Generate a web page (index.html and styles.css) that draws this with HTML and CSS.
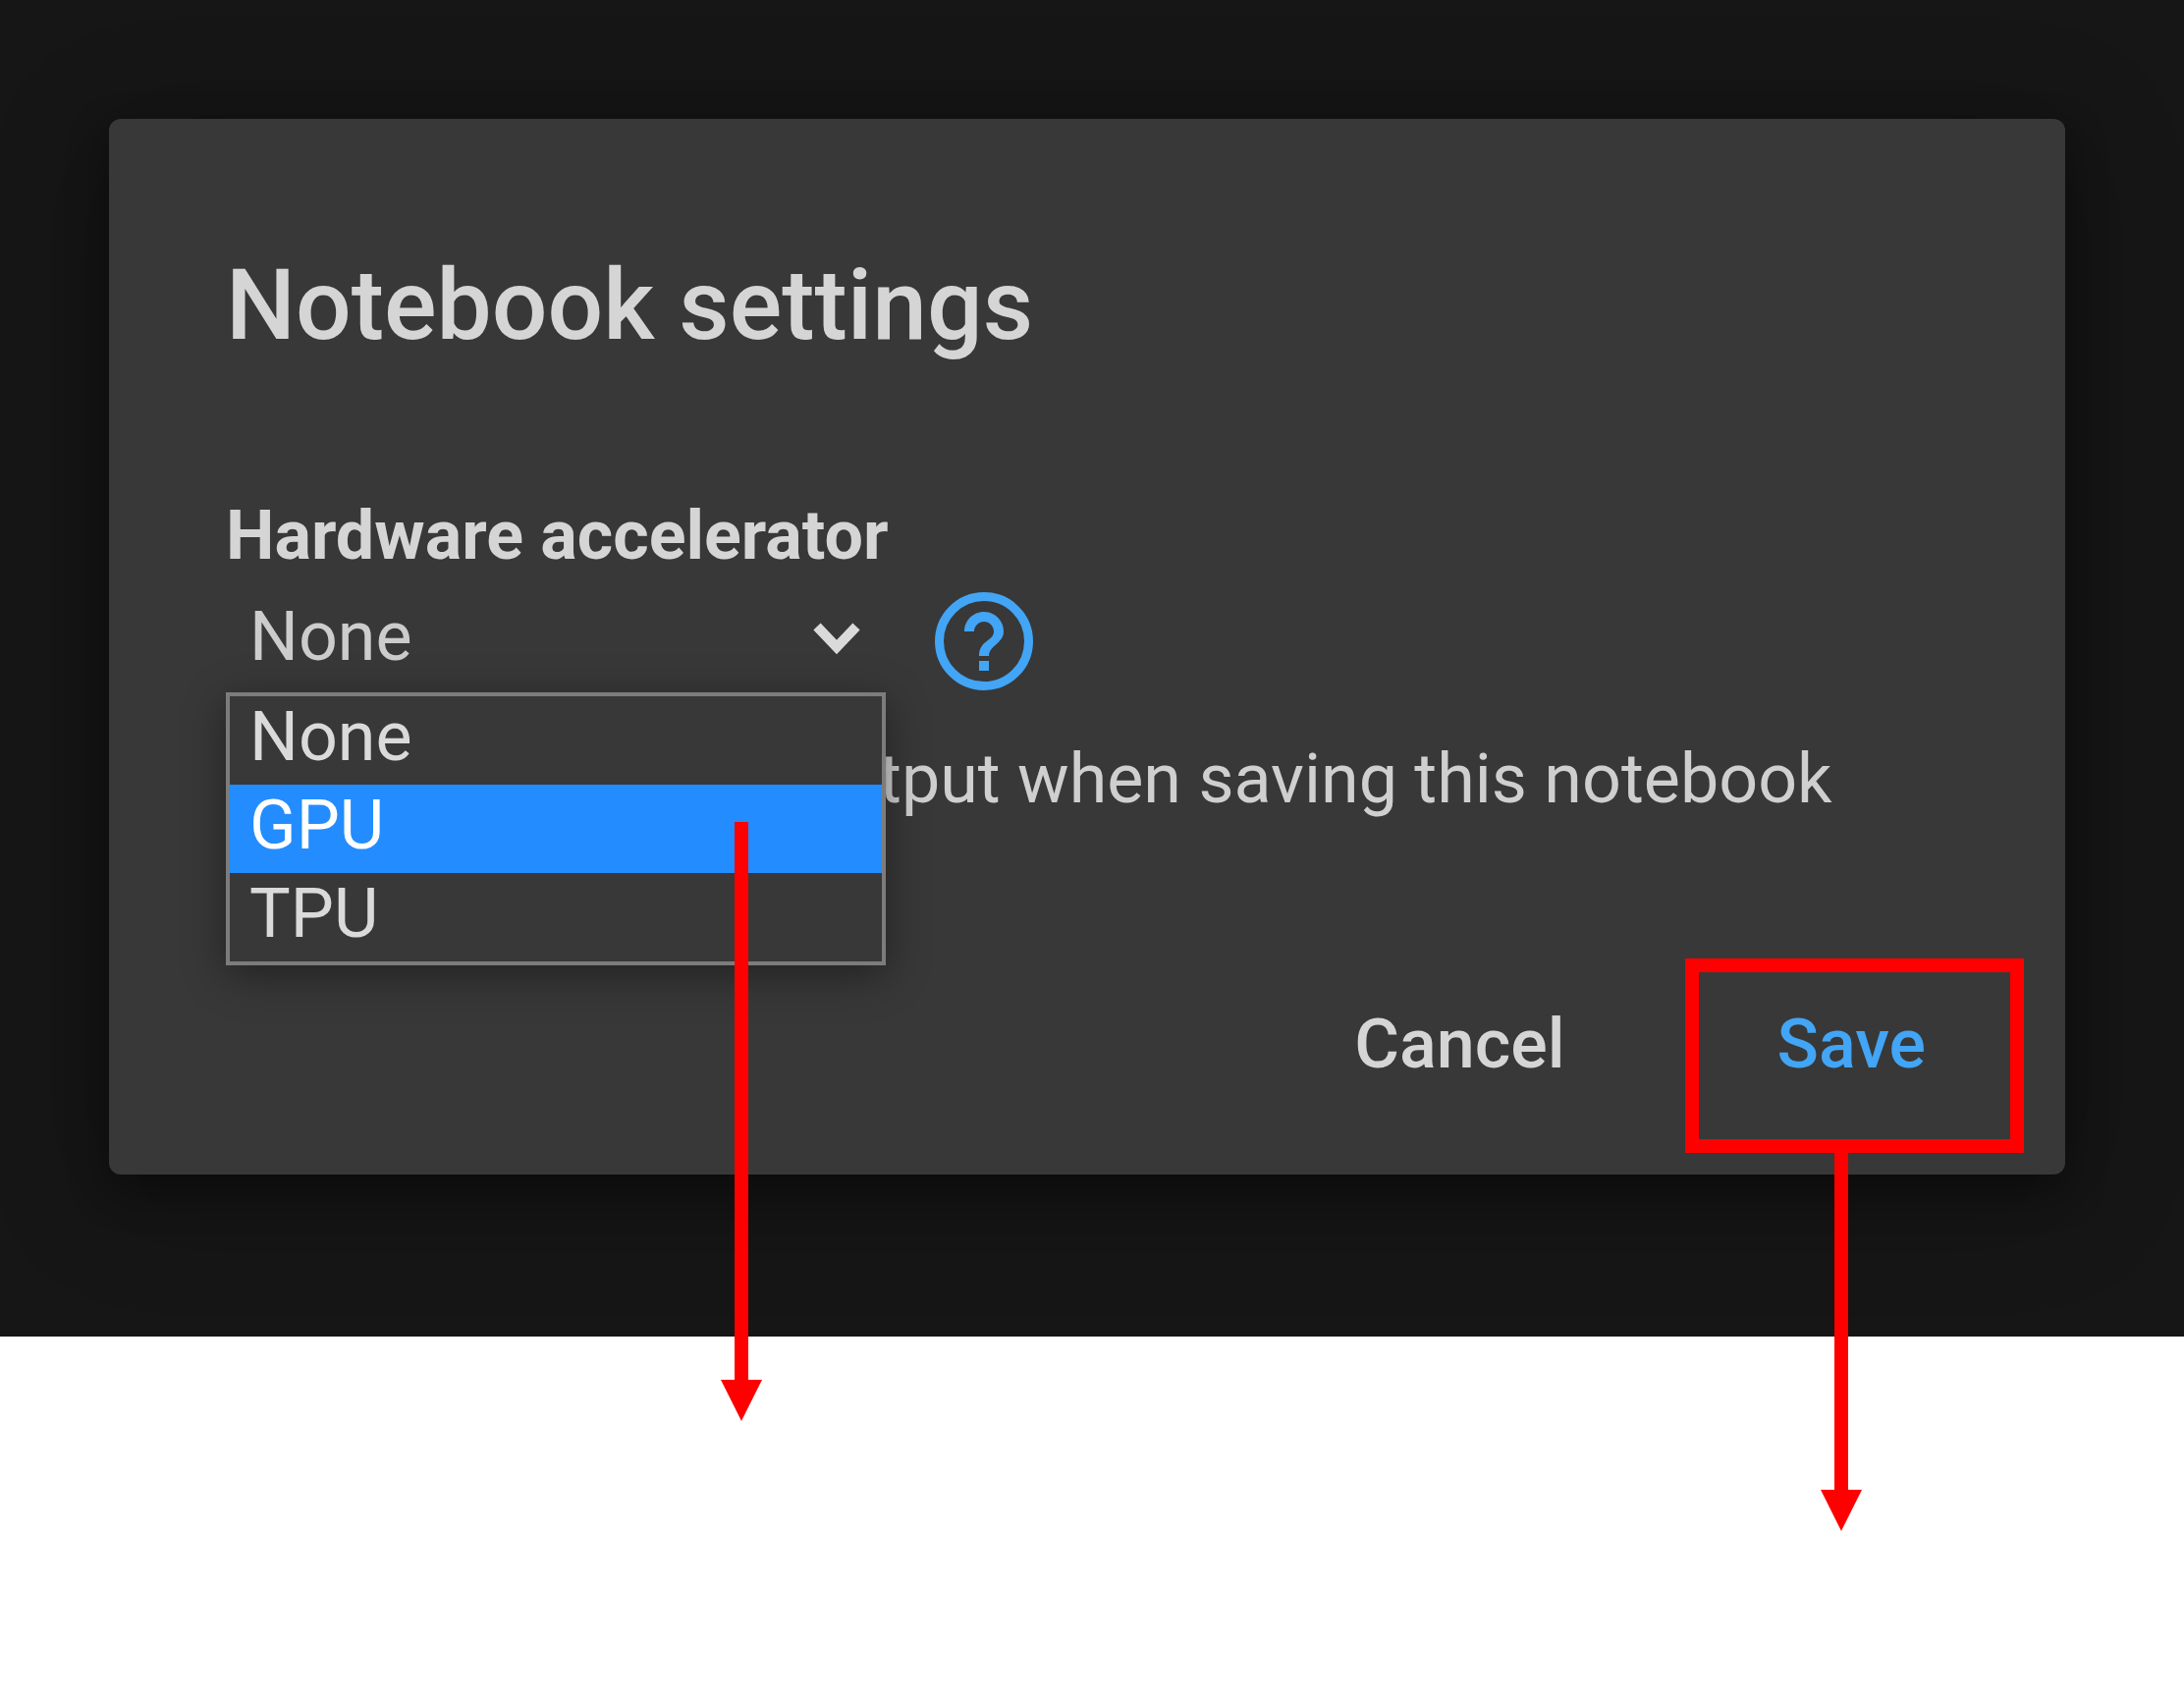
FILE: index.html
```html
<!DOCTYPE html>
<html lang="en">
<head>
  <meta charset="utf-8">
  <meta name="viewport" content="width=device-width, initial-scale=1">
  <title>Notebook settings</title>
  <link rel="stylesheet" href="styles.css">
</head>
<body>
  <main class="backdrop">
    <form class="dialog" role="dialog" aria-labelledby="dialog-title">
      <h1 class="dialog-title" id="dialog-title">Notebook settings</h1>

      <label class="field-label" for="accelerator">Hardware accelerator</label>
      <div class="field-row">
        <div class="select-wrap">
          <select class="select" id="accelerator">
            <option selected>None</option>
            <option>GPU</option>
            <option>TPU</option>
          </select>
          <svg class="chevron" viewBox="0 0 48 34" aria-hidden="true">
            <path d="M4 5 L24 26 L44 5" fill="none" stroke="#dadada" stroke-width="10"/>
          </svg>
          <div class="menu">
            <ul class="menu-list" role="listbox" aria-label="Hardware accelerator">
              <li class="menu-item" role="option">None</li>
              <li class="menu-item menu-item-active" role="option" aria-selected="true">GPU</li>
              <li class="menu-item" role="option">TPU</li>
            </ul>
            <svg class="arrow arrow-option" viewBox="0 0 42 610" aria-hidden="true">
              <path d="M14 0 H28 V568 H42 L21 610 L0 568 H14 Z" fill="#ff0000"/>
            </svg>
          </div>
        </div>
        <a class="help" href="#help" aria-label="Help">
          <svg class="help-icon" viewBox="0 0 24 24" aria-hidden="true">
            <circle cx="12" cy="12" r="9.100" fill="none" stroke="#42a5f5" stroke-width="1.800"/>
            <path fill="#42a5f5" d="M11 18h2v-2h-2v2zM12 6c-2.210 0-4 1.790-4 4h2c0-1.100.9-2 2-2s2 .9 2 2c0 2-3 1.750-3 5h2c0-2.250 3-2.500 3-5 0-2.210-1.790-4-4-4z"/>
          </svg>
        </a>
      </div>

      <div class="check-row">
        <input class="checkbox" type="checkbox" id="omit-output">
        <label class="check-label" for="omit-output">Omit code cell output when saving this notebook</label>
      </div>

      <div class="actions">
        <button class="button" type="button">Cancel</button>
        <div class="save-wrap">
          <button class="button button-primary" type="button">Save</button>
          <div class="callout">
            <svg class="arrow arrow-save" viewBox="0 0 42 399" aria-hidden="true">
              <path d="M14 0 H28 V357 H42 L21 399 L0 357 H14 Z" fill="#ff0000"/>
            </svg>
          </div>
        </div>
      </div>
    </form>
  </main>
</body>
</html>
```
FILE: styles.css
```css
* {
  box-sizing: border-box;
}

body {
  margin: 0;
  min-height: 100vh;
  background: #ffffff;
  color: #d5d5d5;
  font-family: Roboto, "Liberation Sans", sans-serif;
  font-size: 70px;
  line-height: 92px;
}

.backdrop {
  padding: 121px 121px 165px 111px;
  background: #161616;
  overflow: clip;
  overflow-clip-margin: 400px;
}

.dialog {
  display: flex;
  flex-direction: column;
  padding: 130px 82px 63px 119px;
  border-radius: 12px;
  background: #383838;
  box-shadow: 0 20px 120px rgba(0, 0, 0, 0.3), 0 16px 40px rgba(0, 0, 0, 0.35);
}

.dialog-title {
  margin: 0 0 128px;
  font-size: 100px;
  font-weight: 500;
  line-height: 120px;
}

.field-label {
  font-weight: 700;
}

.field-row {
  display: flex;
  align-items: flex-start;
  gap: 40px;
}

.select-wrap {
  position: relative;
  flex: 0 0 672px;
}

.select {
  display: block;
  width: 100%;
  height: 114px;
  padding: 0 24px;
  border: 0;
  background: transparent;
  color: #cccccc;
  font: inherit;
  appearance: none;
}

.chevron {
  position: absolute;
  top: 42px;
  right: 26px;
  width: 48px;
  height: 34px;
  pointer-events: none;
}

.menu {
  position: absolute;
  z-index: 1;
  top: 100%;
  left: 0;
  right: 0;
  border: 4px solid #7c7c7c;
  background: #383838;
  box-shadow: 0 10px 40px rgba(0, 0, 0, 0.4);
}

.menu-list {
  margin: 0;
  padding: 0;
  list-style: none;
}

.menu-item {
  height: 90px;
  padding: 0 20px;
  line-height: 82px;
  color: #dadada;
}

.menu-item-active {
  background: #238cff;
  color: #ffffff;
}

.arrow {
  position: absolute;
  width: 42px;
}

.arrow-option {
  top: 128px;
  right: 122px;
  height: 610px;
}

.help {
  display: block;
  padding-top: 2px;
}

.help-icon {
  display: block;
  width: 120px;
  height: 120px;
}

.check-row {
  display: flex;
  align-items: center;
  gap: 60px;
  margin-top: 34px;
}

.checkbox {
  width: 64px;
  height: 64px;
  margin: 0;
}

.check-label {
  color: #cfcfcf;
}

.actions {
  display: flex;
  justify-content: flex-end;
  gap: 96px;
  margin-top: 154px;
}

.button {
  height: 140px;
  padding: 0 60px;
  border: 0;
  background: transparent;
  color: #d5d5d5;
  font: inherit;
  font-weight: 500;
}

.button-primary {
  color: #42a5f5;
}

.save-wrap {
  position: relative;
}

.callout {
  position: absolute;
  top: -17px;
  right: -40px;
  bottom: -41px;
  left: -34px;
  border: 14px solid #ff0000;
  pointer-events: none;
}

.arrow-save {
  top: 100%;
  left: 124px;
  height: 399px;
}
```
